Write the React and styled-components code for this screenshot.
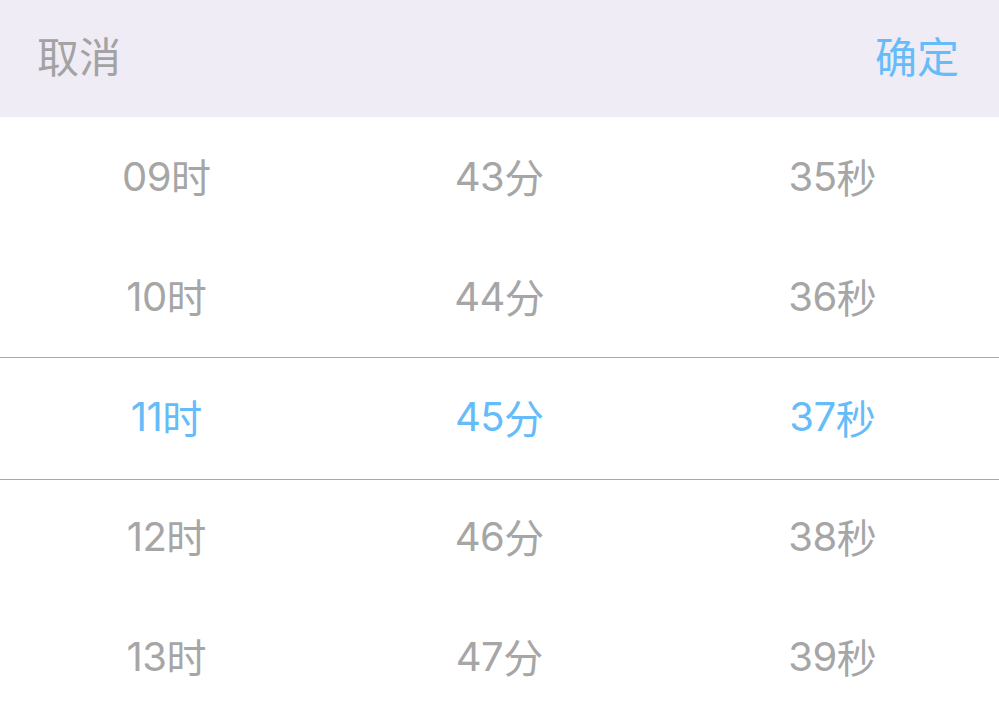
import React from 'react'
import styled, {createGlobalStyle} from 'styled-components'

const GlobalStyle = createGlobalStyle`
  html, body {
    margin: 0;
    padding: 0;
    background: #ffffff;
  }
  body {
    font-family: "Inter", "Noto Sans CJK SC", sans-serif;
  }
`

const Sheet = styled.div`
  width: 999px;
  height: 720px;
  display: flex;
  flex-direction: column;
  background: #ffffff;
  overflow: hidden;
`

const Toolbar = styled.div`
  height: 117px;
  flex-shrink: 0;
  display: flex;
  align-items: center;
  justify-content: space-between;
  padding: 0 40px 0 37px;
  background: #efecf6;
`

const ToolButton = styled.button`
  border: 0;
  background: none;
  padding: 0;
  margin-top: -8px;
  font-family: "Noto Sans CJK SC", sans-serif;
  font-size: 42px;
  line-height: 1;
  color: ${p => (p.primary ? '#66bbf9' : '#a3a3a3')};
  cursor: pointer;
`

const Wheel = styled.div`
  display: flex;
  flex-direction: column;
  padding-top: 1px;
`

const Row = styled.div`
  display: grid;
  grid-template-columns: repeat(3, 1fr);
  height: ${p => (p.selected ? 123 : 120)}px;
  margin: ${p => (p.selected ? '-1px 0 -2px' : '0')};
  box-sizing: border-box;
  border-top: ${p => (p.selected ? '1px solid #7ab7e9' : 'none')};
  border-bottom: ${p => (p.selected ? '1px solid #7ab7e9' : 'none')};
`

const Cell = styled.div`
  display: flex;
  align-items: center;
  justify-content: center;
  padding-bottom: 4px;
  font-size: 40px;
  letter-spacing: -0.5px;
  color: ${p => (p.selected ? '#66bbf9' : '#a6a6a6')};
`

const Unit = styled.span`
  font-family: "Noto Sans CJK SC", sans-serif;
  letter-spacing: 0;
`

const rows = [
  ['09', '43', '35'],
  ['10', '44', '36'],
  ['11', '45', '37'],
  ['12', '46', '38'],
  ['13', '47', '39']
]

const units = ['时', '分', '秒']
const SELECTED = 2

export default function App() {
  return (
    <Sheet>
      <GlobalStyle />
      <Toolbar>
        <ToolButton>取消</ToolButton>
        <ToolButton primary>确定</ToolButton>
      </Toolbar>
      <Wheel>
        {rows.map((row, i) => (
          <Row key={i} selected={i === SELECTED}>
            {row.map((value, j) => (
              <Cell key={j} selected={i === SELECTED}>
                {value}
                <Unit>{units[j]}</Unit>
              </Cell>
            ))}
          </Row>
        ))}
      </Wheel>
    </Sheet>
  )
}
